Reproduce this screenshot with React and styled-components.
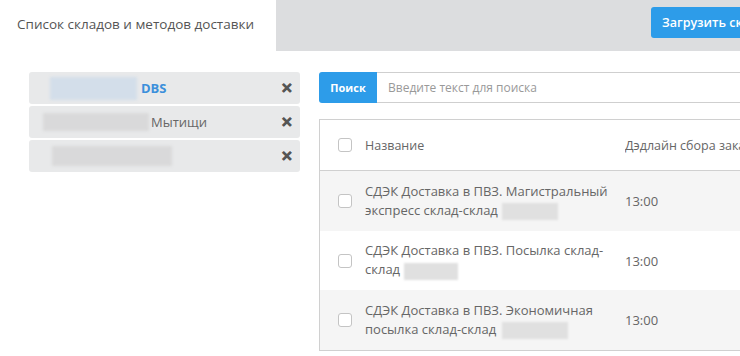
import React from "react";
import styled, { createGlobalStyle } from "styled-components";

const Global = createGlobalStyle`
  html, body { margin: 0; padding: 0; background: #fff; overflow: hidden; }
  body { font-family: "Open Sans", "Noto Sans", sans-serif; color: #555; }
  * { box-sizing: border-box; }
`;

const Page = styled.div`
  width: 740px;
  height: 356px;
  overflow: hidden;
`;

const Header = styled.div`
  display: flex;
  height: 51px;
`;

const Tab = styled.div`
  width: 276px;
  flex: none;
  background: #fff;
  font-size: 13.5px;
  color: #555;
  padding: 15px 0 0 17px;
  white-space: nowrap;
`;

const HeaderBar = styled.div`
  flex: 1;
  background: #dcdddf;
  padding: 7px 0 0 375px;
  white-space: nowrap;
  overflow: hidden;
`;

const PrimaryButton = styled.button`
  font-family: inherit;
  border: none;
  background: #2d9ce9;
  color: #fff;
  font-weight: 600;
  font-size: 12.5px;
  height: 31px;
  padding: 0 11px;
  border-radius: 3px;
  white-space: nowrap;
`;

const Body = styled.div`
  display: flex;
  padding: 21px 0 0 29px;
  gap: 19px;
`;

const Sidebar = styled.div`
  width: 271px;
  flex: none;
  display: flex;
  flex-direction: column;
  gap: 2px;
`;

const SideItem = styled.div`
  height: 32px;
  background: #e8e9ea;
  border-radius: 3px;
  display: flex;
  align-items: center;
  padding-left: ${(p) => p.$pad}px;
  padding-right: 7px;
  font-size: 13px;
`;

const Blur = styled.div`
  width: ${(p) => p.$w}px;
  height: ${(p) => p.$h}px;
  background: ${(p) => p.$c || "#d9d9da"};
  filter: blur(1.5px);
  flex: none;
`;

const ItemLabel = styled.span`
  margin-left: ${(p) => p.$ml || 2}px;
  color: ${(p) => (p.$accent ? "#3b8fdb" : "#666")};
  font-weight: ${(p) => (p.$accent ? 700 : 400)};
  flex: 1;
`;

const Close = styled.span`
  margin-left: auto;
  font-size: 14px;
  font-weight: 700;
  color: #555;
  line-height: 1;
  -webkit-text-stroke: 0.6px #555;
`;

const Main = styled.div`
  width: 500px;
  flex: none;
  display: flex;
  flex-direction: column;
`;

const SearchGroup = styled.div`
  display: flex;
  height: 31px;
`;

const SearchButton = styled.button`
  font-family: inherit;
  width: 58px;
  border: none;
  background: #2d9ce9;
  color: #fff;
  font-weight: 700;
  font-size: 11px;
  border-radius: 3px 0 0 3px;
  padding: 0;
`;

const SearchInput = styled.div`
  flex: 1;
  border: 1px solid #cfcfcf;
  border-left: none;
  font-size: 12px;
  color: #999;
  display: flex;
  align-items: center;
  padding-left: 11px;
`;

const Table = styled.div`
  margin-top: 16px;
  border: 1px solid #d0d0d0;
  border-right: none;
`;

const Row = styled.div`
  display: flex;
  align-items: center;
  height: ${(p) => p.$h}px;
  background: ${(p) => (p.$striped ? "#f5f5f5" : "#fff")};
  border-bottom: ${(p) => (p.$head ? "1px solid #d0d0d0" : "none")};
  font-size: ${(p) => (p.$head ? 12.5 : 13)}px;
  color: #666;
`;

const CheckCell = styled.div`
  width: 45px;
  flex: none;
  padding-left: 18px;
  display: flex;
  align-items: center;
`;

const Checkbox = styled.span`
  width: 14px;
  height: 14px;
  border: 1px solid #c4c4c4;
  border-radius: 3px;
  background: #fff;
  display: block;
`;

const NameCell = styled.div`
  width: 260px;
  flex: none;
  line-height: 19px;
  padding-right: 8px;
`;

const InlineBlur = styled.span`
  display: inline-block;
  vertical-align: middle;
  width: ${(p) => p.$w}px;
  height: 17px;
  background: #e0e0e0;
  filter: blur(1px);
  margin-left: ${(p) => p.$ml || 3}px;
`;

const TimeCell = styled.div`
  flex: 1;
  min-width: 0;
  white-space: nowrap;
  overflow: hidden;
`;

const rows = [
  { a: "СДЭК Доставка в ПВЗ. Магистральный", b: "экспресс склад-склад", w: 56, ml: 4 },
  { a: "СДЭК Доставка в ПВЗ. Посылка склад-", b: "склад", w: 54, ml: 4 },
  { a: "СДЭК Доставка в ПВЗ. Экономичная", b: "посылка склад-склад", w: 66, ml: 6 },
];

export default function App() {
  return (
    <Page>
      <Global />
      <Header>
        <Tab>Список складов и методов доставки</Tab>
        <HeaderBar>
          <PrimaryButton>Загрузить склады</PrimaryButton>
        </HeaderBar>
      </Header>
      <Body>
        <Sidebar>
          <SideItem $pad={21}>
            <Blur $w={87} $h={23} $c="#d3deea" />
            <ItemLabel $accent $ml={4}>DBS</ItemLabel>
            <Close>✕</Close>
          </SideItem>
          <SideItem $pad={14}>
            <Blur $w={106} $h={18} />
            <ItemLabel $ml={2}>Мытищи</ItemLabel>
            <Close>✕</Close>
          </SideItem>
          <SideItem $pad={23}>
            <Blur $w={120} $h={20} />
            <Close>✕</Close>
          </SideItem>
        </Sidebar>
        <Main>
          <SearchGroup>
            <SearchButton>Поиск</SearchButton>
            <SearchInput>Введите текст для поиска</SearchInput>
          </SearchGroup>
          <Table>
            <Row $head $h={51}>
              <CheckCell><Checkbox /></CheckCell>
              <NameCell>Название</NameCell>
              <TimeCell>Дэдлайн сбора заказов</TimeCell>
            </Row>
            {rows.map((r, i) => (
              <Row key={i} $striped={i % 2 === 0} $h={i === 1 ? 59 : 60}>
                <CheckCell><Checkbox /></CheckCell>
                <NameCell>
                  {r.a}
                  <br />
                  {r.b}
                  <InlineBlur $w={r.w} $ml={r.ml} />
                </NameCell>
                <TimeCell>13:00</TimeCell>
              </Row>
            ))}
          </Table>
        </Main>
      </Body>
    </Page>
  );
}
